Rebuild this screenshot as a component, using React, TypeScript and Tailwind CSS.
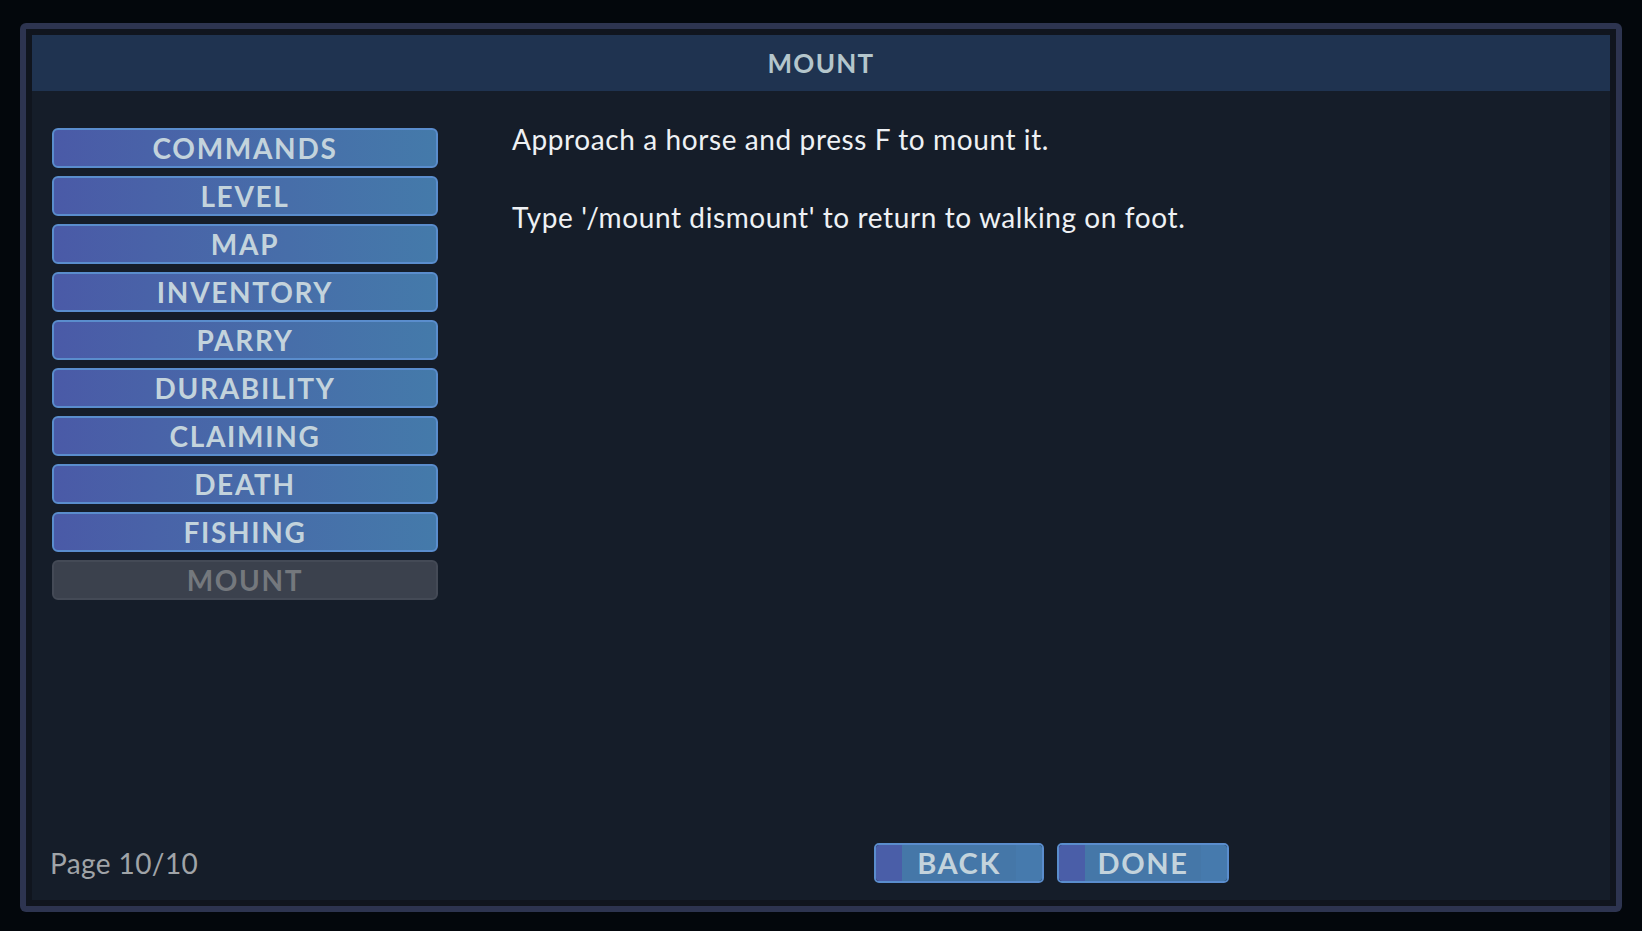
const topics = [
  'COMMANDS',
  'LEVEL',
  'MAP',
  'INVENTORY',
  'PARRY',
  'DURABILITY',
  'CLAIMING',
  'DEATH',
  'FISHING',
  'MOUNT',
]

const font = { fontFamily: 'Lato, "Open Sans", sans-serif' }

function TopicButton({ label, active }: { label: string; active: boolean }) {
  if (active) {
    return (
      <div className="h-[40px] w-[386px] rounded-[6px] border-2 border-[#444a56] bg-[#3b414d] flex items-center justify-center">
        <span className="text-[28px] font-bold tracking-[1.7px] text-[#74787d]">{label}</span>
      </div>
    )
  }
  return (
    <button className="h-[40px] w-[386px] rounded-[6px] border-2 border-[#5a8dcd] bg-linear-to-r from-[#4a5aa7] to-[#447aaa] flex items-center justify-center">
      <span className="text-[28px] font-bold tracking-[1.7px] text-[#c3d3dc]">{label}</span>
    </button>
  )
}

function FooterButton({ label, width }: { label: string; width: string }) {
  return (
    <button
      className={`${width} h-[40px] rounded-[5px] border-2 border-[#5a8dcd] overflow-hidden flex`}
    >
      <div className="w-[26px] h-full bg-[#4a5ea8]" />
      <div className="flex-1 h-full bg-[#4577a8] flex items-center justify-center">
        <span className="text-[29px] font-bold tracking-[1.6px] text-[#c3d3dc]">{label}</span>
      </div>
      <div className="w-[26px] h-full bg-[#467aad]" />
    </button>
  )
}

export default function App() {
  return (
    <div className="w-full h-[931px] bg-[#03070c] pt-[23px] pl-[20px]" style={font}>
      {/* Outer frame */}
      <div className="w-[1602px] h-[889px] rounded-[6px] bg-[#2d3450] p-[6px]">
        <div className="w-full h-full bg-[#10151e] p-[6px] flex flex-col">
          {/* Title bar */}
          <div className="h-[56px] shrink-0 bg-[#1f3350] flex items-center justify-center">
            <h1 className="text-[26px] font-bold tracking-wider text-[#b4c6cc]">MOUNT</h1>
          </div>

          {/* Body */}
          <div className="flex-1 bg-[#151d29] flex flex-col">
            <div className="flex-1 flex">
              <div className="pl-[20px] pt-[37px] flex flex-col gap-[8px]">
                {topics.map((t) => (
                  <TopicButton key={t} label={t} active={t === 'MOUNT'} />
                ))}
              </div>
              <div className="pl-[74px] pt-[29px] text-[28px] leading-[39px] tracking-[0.6px] text-[#eef1f4]">
                <p>Approach a horse and press F to mount it.</p>
                <p>&nbsp;</p>
                <p>Type '/mount dismount' to return to walking on foot.</p>
              </div>
            </div>

            {/* Footer */}
            <div className="flex items-center pl-[18px] pb-[16px]">
              <span className="w-[824px] text-[28px] tracking-[0.4px] text-[#a0a4a8]">Page 10/10</span>
              <div className="flex gap-[13px]">
                <FooterButton label="BACK" width="w-[170px]" />
                <FooterButton label="DONE" width="w-[172px]" />
              </div>
            </div>
          </div>
        </div>
      </div>
    </div>
  )
}
